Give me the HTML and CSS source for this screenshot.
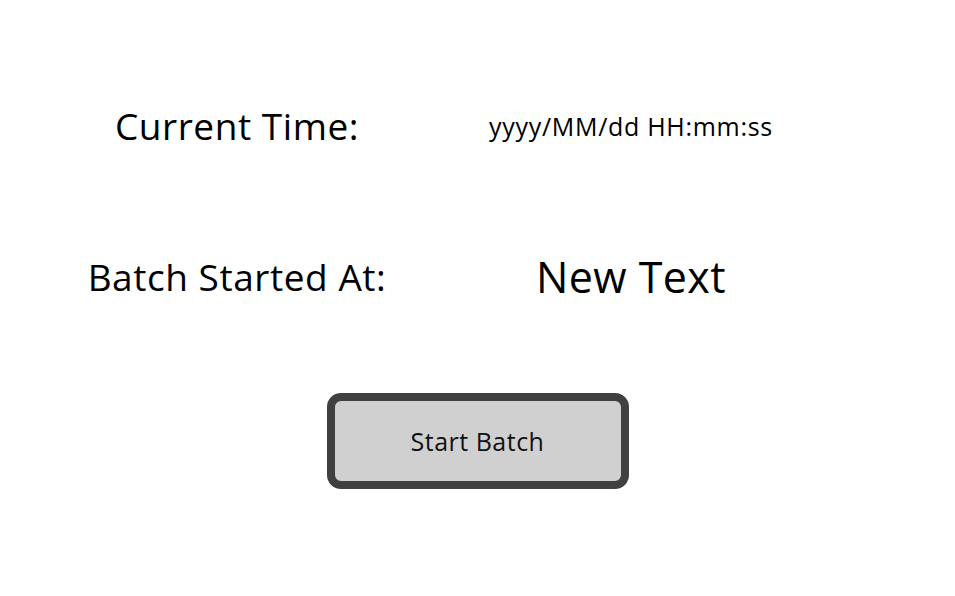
FILE: index.html
```html
<!DOCTYPE html>
<html lang="en">

<head>
  <meta charset="UTF-8">
  <title>Batch Runner</title>
  <meta name="viewport" content="width=device-width, initial-scale=1.0" />
  <link rel="stylesheet" href="styles.css">
</head>

<body>
  <div class="panel">
    <div class="grid">
      <div class="label">Current Time:</div>
      <div class="clock" id="clock">yyyy/MM/dd HH:mm:ss</div>

      <div class="label">Batch Started At:</div>
      <div class="value" id="startedAt">New Text</div>
    </div>

    <div class="actions">
      <button class="start-btn">Start Batch</button>
    </div>
  </div>
</body>

</html>
```

FILE: styles.css
```css
* {
  box-sizing: border-box;
}

body {
  font-family: "Open Sans", "Noto Sans", sans-serif;
  margin: 0;
  background: white;
  color: #000;
}

.panel {
  width: 955px;
  height: 596px;
  padding-top: 50px;
}

.grid {
  display: grid;
  grid-template-columns: 394px 394px;
  grid-auto-rows: 151px;
  align-items: center;
  justify-items: center;
  padding-left: 40px;
}

.label {
  font-size: 37px;
  letter-spacing: 0.55px;
}

.clock {
  font-size: 25px;
  letter-spacing: 0.7px;
}

.value {
  font-size: 43px;
  letter-spacing: 0.4px;
}

.actions {
  display: flex;
  justify-content: center;
  margin-top: 41px;
}

.start-btn {
  width: 302px;
  height: 96px;
  font-family: "Open Sans", "Noto Sans", sans-serif;
  font-size: 25px;
  letter-spacing: 0.5px;
  color: #111;
  background: #d0d0d0;
  border: 8px solid #404040;
  border-radius: 14px;
}
```
